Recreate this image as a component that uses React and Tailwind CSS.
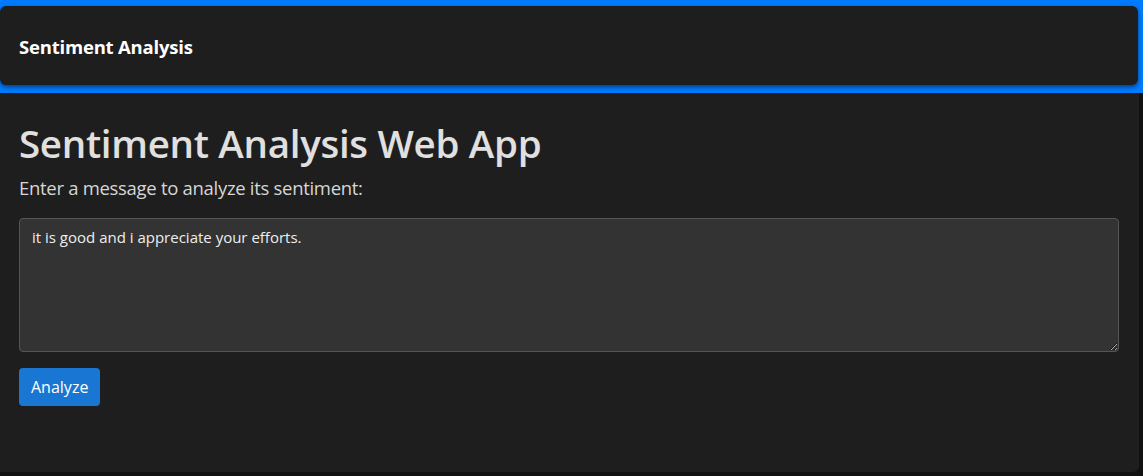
import React from 'react';

export default function App() {
  return (
    <div className="w-[1143px] h-[476px] bg-[#111111] overflow-hidden font-['Open_Sans',sans-serif]">
      {/* Top bar */}
      <div className="bg-[#007bff] pt-[6px] pb-[8px] pr-[5px]">
        <nav className="h-[79px] bg-[#1e1e1e] rounded-md shadow-[0_2px_4px_rgba(0,0,0,0.5)] flex items-center px-[19px] pt-[3px]">
          <span className="text-white text-[18.5px] font-bold tracking-[-0.2px]">Sentiment Analysis</span>
        </nav>
      </div>

      {/* Main card */}
      <div className="w-[1139px] h-[379px] bg-[#1e1e1e] rounded-br-md px-[19px] pt-[27px]">
        <h1 className="text-[#e0e0e0] text-[38.5px] font-semibold leading-[46px] tracking-[-0.3px]">
          Sentiment Analysis Web App
        </h1>
        <p className="mt-[10px] text-[#d6d6d6] text-[18.5px] leading-[24px] tracking-[-0.3px]">
          Enter a message to analyze its sentiment:
        </p>
        <textarea
          className="mt-[18px] block w-[1100px] h-[134px] bg-[#333333] border border-[#555555] rounded-[4px] px-[12px] py-[6px] text-[15px] leading-[24px] text-[#eeeeee] outline-none"
          defaultValue="it is good and i appreciate your efforts."
        />
        <button className="mt-[16px] h-[38px] px-[12px] bg-[#1976d2] rounded-[4px] text-white text-[16px]">
          Analyze
        </button>
      </div>
    </div>
  );
}
